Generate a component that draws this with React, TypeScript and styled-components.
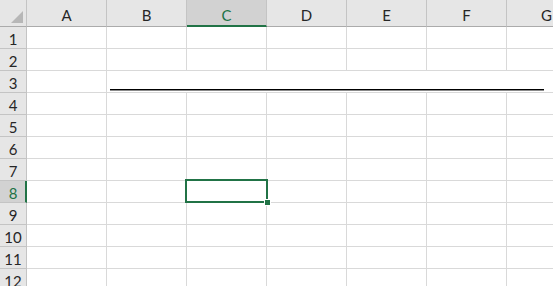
import React from 'react'
import styled, { createGlobalStyle, css } from 'styled-components'

const GlobalStyle = createGlobalStyle`
  html, body {
    margin: 0;
    padding: 0;
    background: #ffffff;
    overflow: hidden;
  }
  * {
    box-sizing: border-box;
  }
`

const GREEN = '#217346'
const GRID = '#d9d9d9'
const HEAD_LINE = '#c4c4c4'

const COLUMNS = ['A', 'B', 'C', 'D', 'E', 'F', 'G']
const ROWS = 12
const SELECTED_COL = 'C'
const SELECTED_ROW = 8

const Sheet = styled.div`
  position: relative;
  display: grid;
  grid-template-columns: 27px repeat(6, 80px) 80px;
  grid-template-rows: 27px repeat(${ROWS}, 22px);
  width: 553px;
  height: 286px;
  overflow: hidden;
  font-family: Lato, 'Liberation Sans', sans-serif;
`

const Corner = styled.div`
  display: flex;
  align-items: flex-end;
  justify-content: flex-end;
  padding: 0 3px 3px 0;
  background: #e6e6e6;
  border-right: 1px solid ${HEAD_LINE};
  border-bottom: 1px solid #ababab;
`

const ColHead = styled.div<{ $active?: boolean }>`
  display: flex;
  align-items: flex-end;
  justify-content: center;
  padding-bottom: 2px;
  font-size: 15px;
  color: #262626;
  background: #e6e6e6;
  border-right: 1px solid ${HEAD_LINE};
  border-bottom: 1px solid #ababab;
  ${p =>
    p.$active &&
    css`
      background: #d2d2d2;
      color: ${GREEN};
      border-bottom: 2px solid ${GREEN};
      padding-bottom: 1px;
    `}
`

const RowHead = styled.div<{ $active?: boolean }>`
  display: flex;
  align-items: center;
  justify-content: center;
  padding-top: 2px;
  font-size: 15px;
  color: #262626;
  background: #e6e6e6;
  border-right: 1px solid ${HEAD_LINE};
  border-bottom: 1px solid ${HEAD_LINE};
  ${p =>
    p.$active &&
    css`
      background: #d2d2d2;
      color: ${GREEN};
      border-right: 2px solid ${GREEN};
      padding-left: 1px;
    `}
`

const Cell = styled.div`
  background: #ffffff;
  border-right: 1px solid ${GRID};
  border-bottom: 1px solid ${GRID};
`

const MergedCell = styled.div`
  grid-column: 3 / span 6;
  display: flex;
  align-items: flex-end;
  padding: 0 0 1px 3px;
  background: #ffffff;
  border-bottom: 1px solid ${GRID};
`

const Rule = styled.div`
  width: 434px;
  height: 2px;
  border-top: 1px solid #000000;
  border-bottom: 1px solid #8a8a8a;
`

const Selection = styled.div`
  position: absolute;
  left: 185px;
  top: 179px;
  width: 83px;
  height: 24px;
  border: 2px solid ${GREEN};
`

const Handle = styled.div`
  position: absolute;
  right: -5px;
  bottom: -5px;
  width: 7px;
  height: 7px;
  background: ${GREEN};
  border: 1px solid #ffffff;
`

const App: React.FC = () => {
  const rows = Array.from({ length: ROWS }, (_, i) => i + 1)

  return (
    <React.Fragment>
      <GlobalStyle />
      <Sheet>
        <Corner>
          <svg width="12" height="12" viewBox="0 0 12 12">
            <polygon points="12,0 12,12 0,12" fill="#b7b7b7" />
          </svg>
        </Corner>
        {COLUMNS.map(c => (
          <ColHead key={c} $active={c === SELECTED_COL}>
            {c}
          </ColHead>
        ))}
        {rows.map(r => (
          <React.Fragment key={r}>
            <RowHead $active={r === SELECTED_ROW}>{r}</RowHead>
            {r === 3 ? (
              <React.Fragment>
                <Cell />
                <MergedCell>
                  <Rule />
                </MergedCell>
              </React.Fragment>
            ) : (
              COLUMNS.map(c => <Cell key={c} />)
            )}
          </React.Fragment>
        ))}
        <Selection>
          <Handle />
        </Selection>
      </Sheet>
    </React.Fragment>
  )
}

export default App
